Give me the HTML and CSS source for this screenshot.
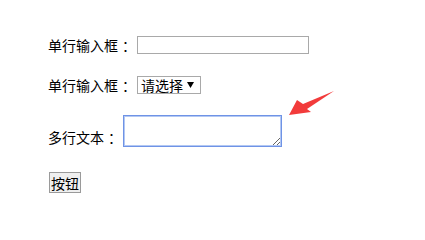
FILE: index.html
```html
<!DOCTYPE html>
<html lang="zh">
<head>
<meta charset="utf-8">
<link rel="stylesheet" href="styles.css">
</head>
<body>
<form class="form">
  <div class="row row-input">
    <label class="label">单行输入框<span class="colon">：</span></label>
    <input class="text-input" type="text">
  </div>
  <div class="row row-select">
    <label class="label">单行输入框<span class="colon">：</span></label>
    <select class="select"><option>请选择</option></select>
  </div>
  <div class="row row-area">
    <label class="label">多行文本<span class="colon">：</span></label>
    <textarea class="area"></textarea>
    <svg class="arrow" width="50" height="28" viewBox="0 0 50 28">
      <polygon points="4,27 12,12 18,16 49,3 22,21 26,24" fill="#f23b3b"/>
    </svg>
  </div>
  <div class="row row-btn">
    <button class="btn" type="button">按钮</button>
  </div>
</form>
</body>
</html>
```

FILE: styles.css
```css
html, body {
  margin: 0;
  padding: 0;
  background: #ffffff;
}
body {
  font-family: "Noto Sans CJK SC", "Noto Sans", sans-serif;
  font-size: 14px;
  color: #000;
}
.form {
  display: flex;
  flex-direction: column;
  padding: 36px 0 0 48px;
}
.row {
  display: flex;
  align-items: center;
  position: relative;
}
.label {
  font-size: 14px;
  line-height: 18px;
  margin-right: 1px;
}
.colon {
  display: inline-block;
  padding-left: 4px;
}
.text-input {
  box-sizing: border-box;
  width: 172px;
  height: 18px;
  border: 1px solid #a9a9a9;
  margin: 0;
  padding: 0 2px;
  outline: none;
}
.row-select {
  margin-top: 22px;
}
.select {
  -webkit-appearance: none;
  appearance: none;
  box-sizing: border-box;
  height: 18px;
  width: 64px;
  border: 1px solid #a9a9a9;
  border-radius: 0;
  margin: 0;
  padding: 0 14px 0 3px;
  font-family: "Noto Sans CJK SC", sans-serif;
  font-size: 14px;
  line-height: 16px;
  color: #000;
  background: #fff url("data:image/svg+xml;utf8,<svg xmlns='http://www.w3.org/2000/svg' width='7' height='6'><polygon points='0,0 7,0 3.5,6' fill='black'/></svg>") no-repeat right 6px center;
}
.row-area {
  margin-top: 21px;
  align-items: flex-end;
}
.row-area .label {
  margin-bottom: 1px;
}
.area {
  box-sizing: border-box;
  width: 159px;
  height: 32px;
  margin: 0;
  border: 1px solid #6f93e6;
  box-shadow: 0 0 0 1px #b3c8f3 inset;
  resize: both;
  outline: none;
}
.arrow {
  position: absolute;
  left: 237px;
  top: -27px;
}
.row-btn {
  margin-top: 25px;
}
.btn {
  box-sizing: border-box;
  height: 21px;
  padding: 0 1px;
  margin: 0 0 0 1px;
  border: 1px solid #9a9a9a;
  background: #efefef;
  border-radius: 0;
  font-family: "Noto Sans CJK SC", sans-serif;
  font-size: 14px;
  line-height: 18px;
  color: #000;
}
```
